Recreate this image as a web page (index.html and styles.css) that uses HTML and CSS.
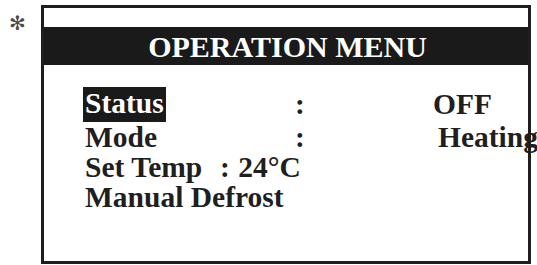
FILE: index.html
```html
<!DOCTYPE html>
<html>
<head>
<meta charset="utf-8">
<link rel="stylesheet" href="styles.css">
</head>
<body>
<div class="mark">✻</div>
<div class="screen">
  <div class="title">OPERATION MENU</div>
  <div class="menu">
    <div class="row first">
      <span class="label selected">Status</span>
      <span class="colon">:</span>
      <span class="value">OFF</span>
    </div>
    <div class="row">
      <span class="label">Mode</span>
      <span class="colon">:</span>
      <span class="value shift">Heating</span>
    </div>
    <div class="row single"><span class="label">Set Temp  <span class="inline-colon">:</span> 24°C</span></div>
    <div class="row single"><span class="label">Manual Defrost</span></div>
  </div>
</div>
</body>
</html>
```

FILE: styles.css
```css
html, body {
  margin: 0;
  background: #ffffff;
}
body {
  display: flex;
  align-items: flex-start;
  padding: 5px 0 0 9px;
  width: 537px;
  height: 265px;
  box-sizing: border-box;
  overflow: hidden;
  font-family: "Liberation Serif", "Times New Roman", serif;
  color: #1f1f1f;
}
.mark {
  font-family: "DejaVu Sans", sans-serif;
  font-size: 20px;
  line-height: 22px;
  color: #4a4a4a;
  margin-top: 7px;
  width: 32px;
}
.screen {
  width: 490px;
  height: 259px;
  box-sizing: border-box;
  border: 3px solid #1e1e1e;
  display: flex;
  flex-direction: column;
}
.title {
  margin-top: 19px;
  height: 38px;
  line-height: 39px;
  background: #1a1a1a;
  color: #ffffff;
  font-weight: bold;
  font-size: 30px;
  text-align: center;
  padding-left: 3px;
}
.menu {
  margin-top: 22px;
  padding-left: 39px;
  font-weight: bold;
  font-size: 29.5px;
}
.row {
  display: grid;
  grid-template-columns: 212px 138px auto;
  line-height: 30px;
  height: 30px;
}
.row.first {
  height: 35px;
}
.row.single {
  display: block;
  padding-left: 2px;
  white-space: pre;
}
.label {
  padding-left: 2px;
}
.row.single .label {
  padding-left: 0;
}
.inline-colon {
  margin: 0 1px 0 3px;
}
.selected {
  justify-self: start;
  background: #1a1a1a;
  color: #ffffff;
  line-height: 31px;
  padding: 1px 2px 3px 2px;
}
.first .colon, .first .value {
  line-height: 35px;
}
.value {
  white-space: nowrap;
}
.value.shift {
  padding-left: 5px;
}
```
